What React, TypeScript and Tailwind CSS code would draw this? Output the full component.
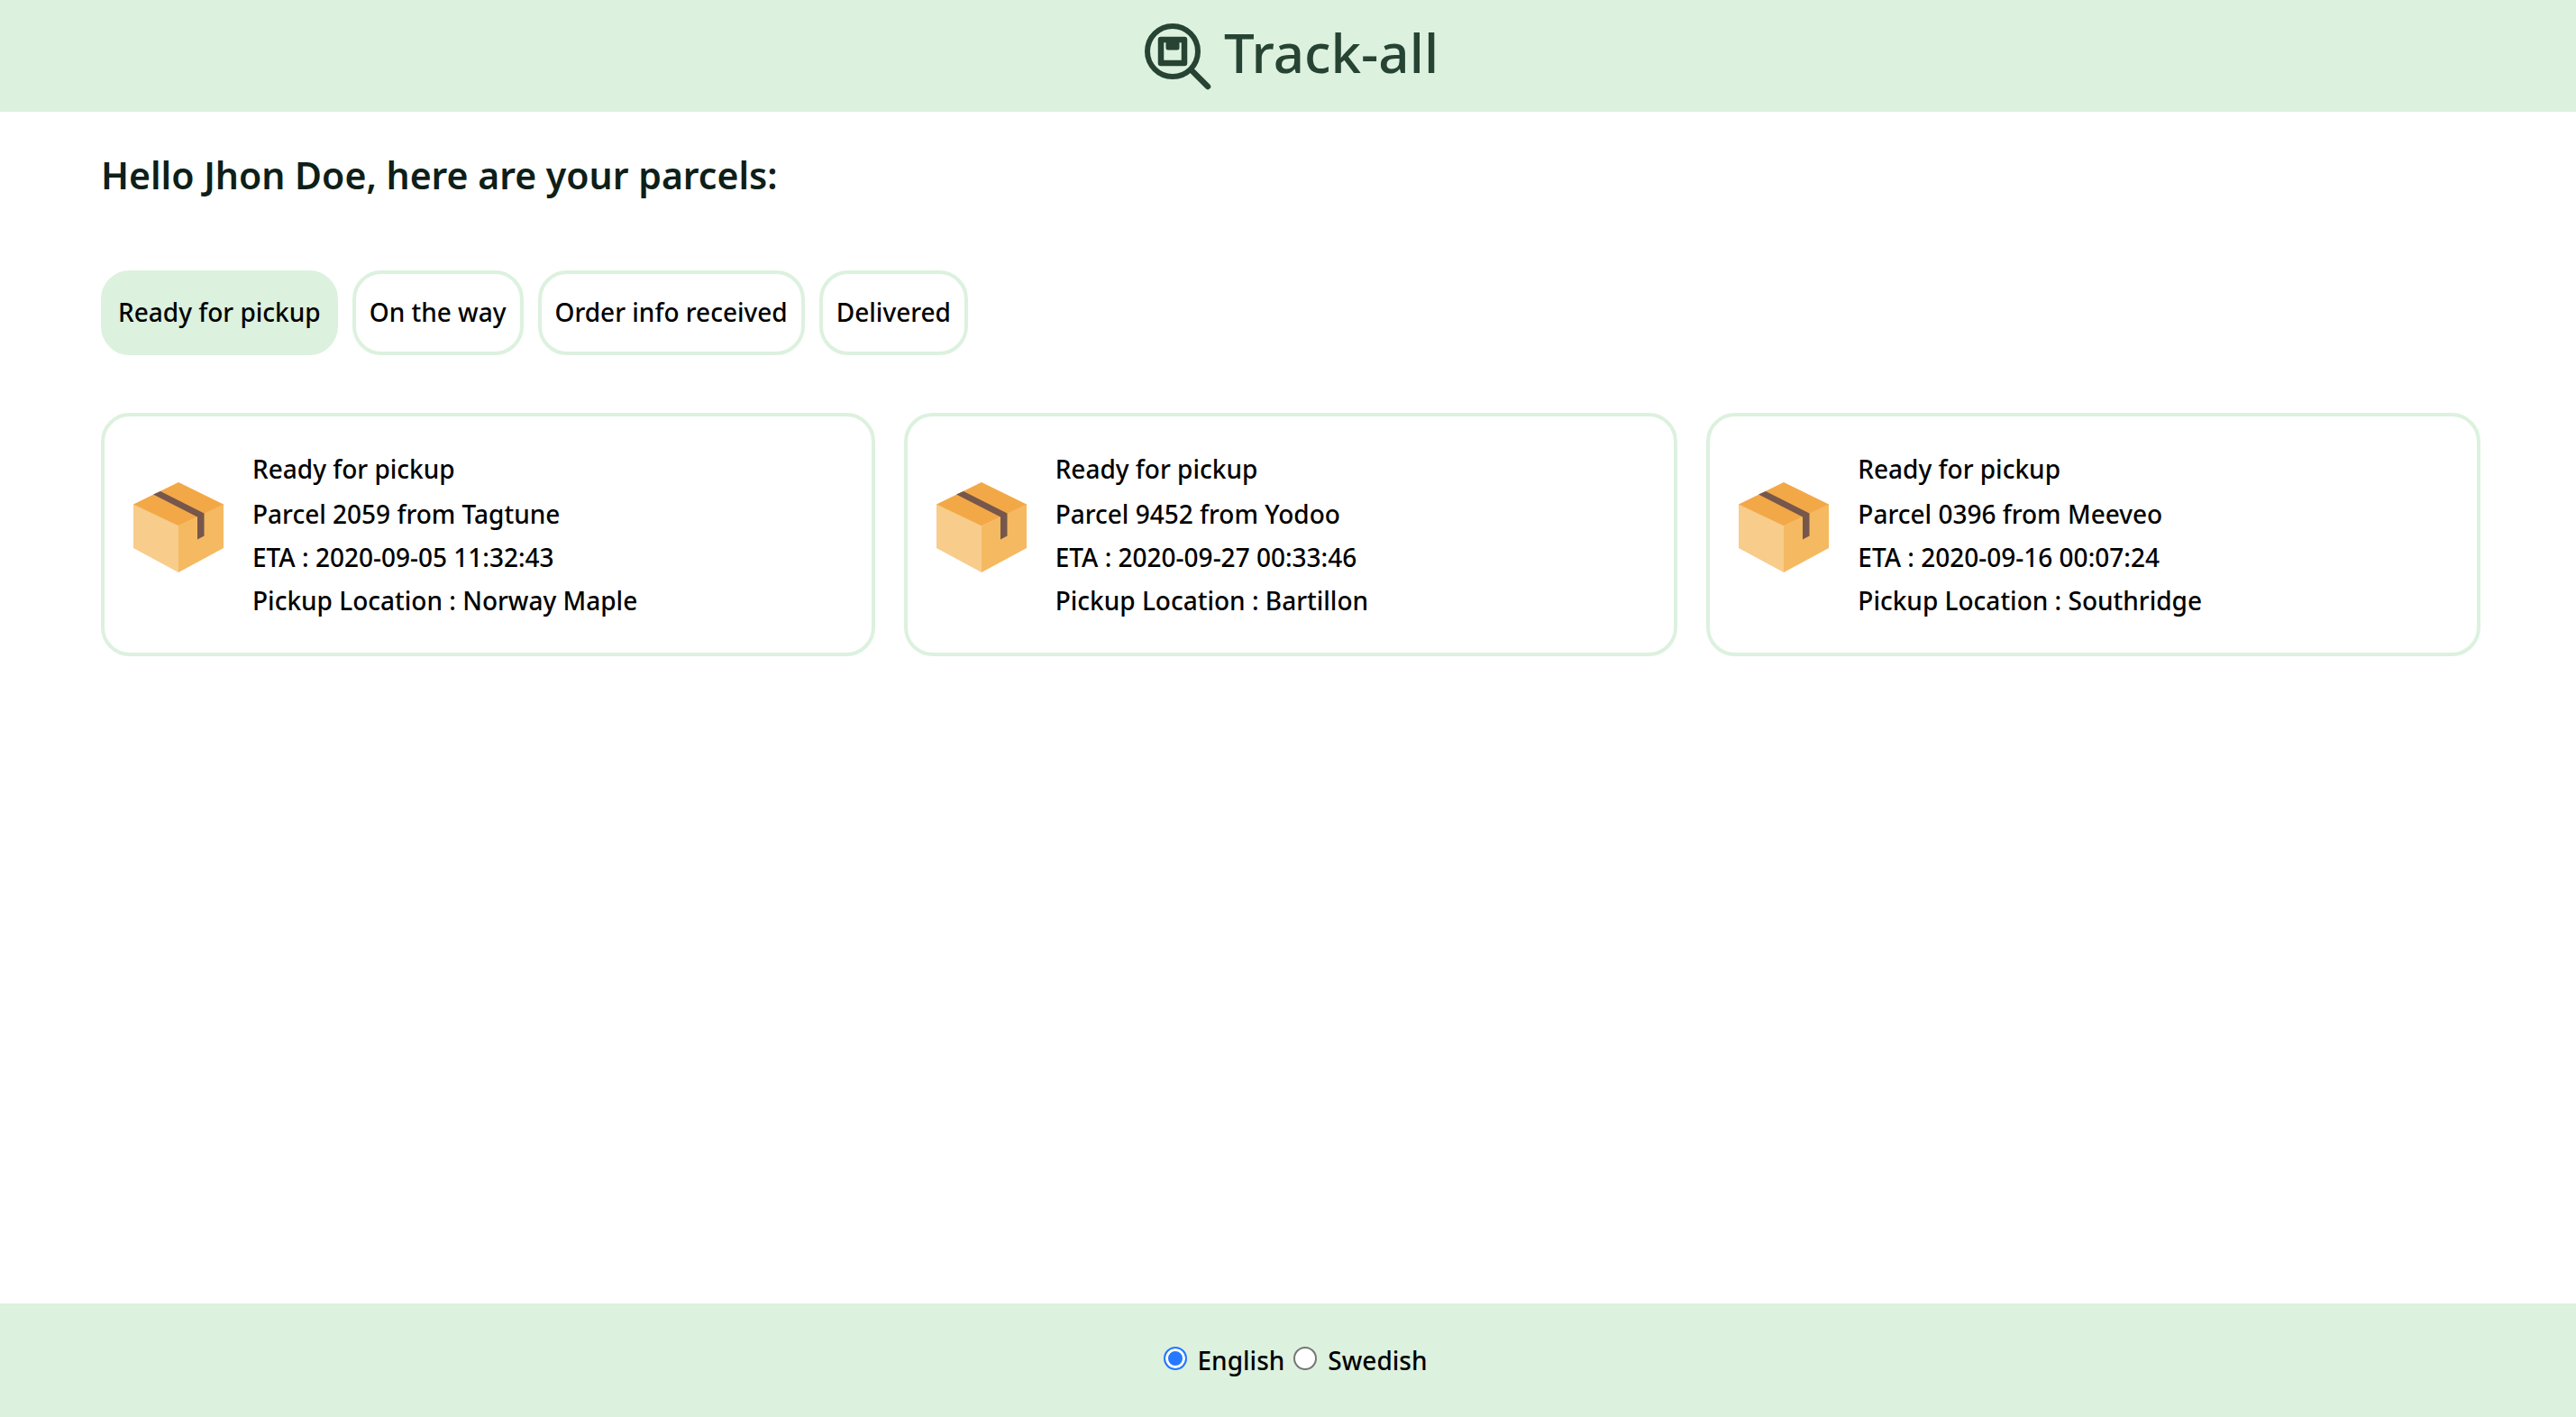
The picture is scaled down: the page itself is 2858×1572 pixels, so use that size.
import { useState } from 'react';

type Parcel = {
  id: string;
  sender: string;
  eta: string;
  location: string;
};

const filters = ['Ready for pickup', 'On the way', 'Order info received', 'Delivered'];

const parcels: Parcel[] = [
  { id: '2059', sender: 'Tagtune', eta: '2020-09-05 11:32:43', location: 'Norway Maple' },
  { id: '9452', sender: 'Yodoo', eta: '2020-09-27 00:33:46', location: 'Bartillon' },
  { id: '0396', sender: 'Meeveo', eta: '2020-09-16 00:07:24', location: 'Southridge' },
];

const languages = ['English', 'Swedish'];

function LogoIcon() {
  return (
    <svg viewBox="0 0 74 74" className="size-[74px]" fill="none" stroke="currentColor" aria-hidden="true">
      <circle cx="31" cy="31" r="28" strokeWidth="6" />
      <path d="M52 52 L70 70" strokeWidth="6.5" strokeLinecap="round" />
      <rect x="18" y="18" width="26" height="26" strokeWidth="6.5" strokeLinejoin="round" />
      <path d="M23.5 20.5h15v6.500a2.500 2.500 0 0 1 -2.500 2.500h-10a2.500 2.500 0 0 1 -2.500 -2.500z" fill="currentColor" stroke="none" />
    </svg>
  );
}

function BoxIcon() {
  return (
    <svg viewBox="0 0 100 100" className="mb-4 size-[100px] shrink-0" aria-hidden="true">
      <path d="M0 24 50 48.500V100L0 73z" fill="#f8cc8b" />
      <path d="M100 24 50 48.500V100L100 73z" fill="#f5b961" />
      <path d="M50 0 100 24.500 50 48.500 0 24.500z" fill="#f3a847" />
      <path d="M22 13.500 30 10 78.500 34.500V59.500L71 63.500V38.500z" fill="#77574b" />
    </svg>
  );
}

function ParcelCard({ parcel, status }: { parcel: Parcel; status: string }) {
  return (
    <article className="flex items-center gap-8 rounded-[32px] border-4 border-[#dcf1de] px-8 py-[34px]">
      <BoxIcon />
      <div className="text-[28px] leading-[48px]">
        <h2 className="mb-0.5">{status}</h2>
        <p>Parcel {parcel.id} from {parcel.sender}</p>
        <p>ETA : {parcel.eta}</p>
        <p>Pickup Location : {parcel.location}</p>
      </div>
    </article>
  );
}

export default function App() {
  const [filter, setFilter] = useState(filters[0]);
  const [language, setLanguage] = useState(languages[0]);

  return (
    <div className="flex min-h-screen flex-col bg-white font-['Noto_Sans',sans-serif] font-medium text-black">
      <header className="flex items-start justify-center gap-[14px] bg-[#dcf1de] pt-[26px] pb-6 pl-2 text-[#264333]">
        <LogoIcon />
        <span className="text-[60px] leading-[64px]">Track-all</span>
      </header>

      <main className="flex-1 pr-[106px] pl-28">
        <h1 className="pt-[38px] text-[41px] leading-[64px] font-semibold text-[#0e1f19]">
          Hello Jhon Doe, here are your parcels:
        </h1>

        <div className="mt-[74px] flex gap-4">
          {filters.map((name) => (
            <button
              key={name}
              type="button"
              aria-pressed={name === filter}
              onClick={() => setFilter(name)}
              className={`rounded-[32px] border-4 border-[#dcf1de] px-[15px] pt-[18px] pb-5 text-[28px] leading-[48px] ${
                name === filter ? 'bg-[#dcf1de]' : 'bg-white'
              }`}
            >
              {name}
            </button>
          ))}
        </div>

        <section className="mt-16 grid grid-cols-3 gap-8">
          {parcels.map((parcel) => (
            <ParcelCard key={parcel.id} parcel={parcel} status={filters[0]} />
          ))}
        </section>
      </main>

      <footer className="flex items-center justify-center gap-2.5 bg-[#dcf1de] py-[39px] pl-4 text-[28px] leading-[48px]">
        {languages.map((name) => (
          <label key={name} className="flex items-center gap-3">
            <input
              type="radio"
              name="language"
              value={name}
              checked={name === language}
              onChange={() => setLanguage(name)}
              className="mb-1 size-[26px] appearance-none rounded-full border-2 border-[#767676] bg-white checked:border-[#2678ff] checked:bg-[#2678ff] checked:shadow-[inset_0_0_0_3px_white]"
            />
            {name}
          </label>
        ))}
      </footer>
    </div>
  );
}
